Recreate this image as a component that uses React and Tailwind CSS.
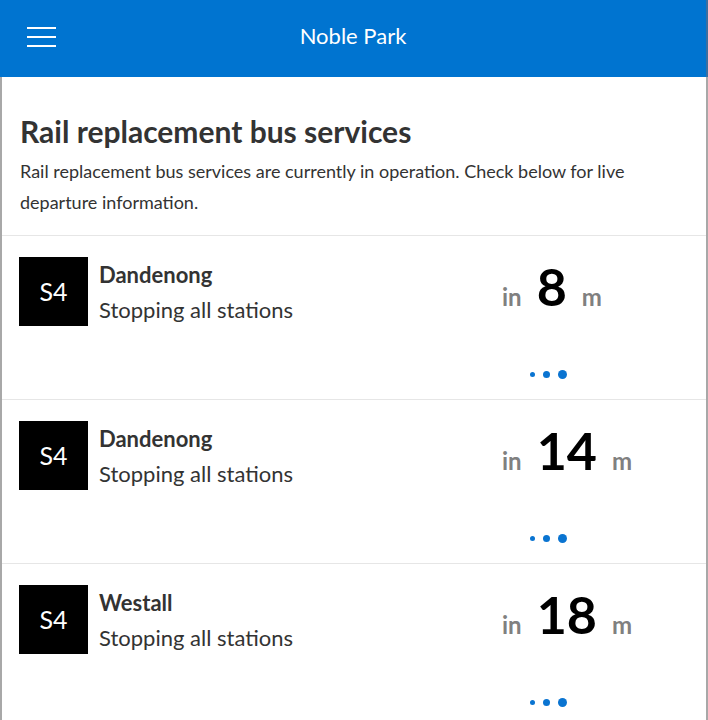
import React from "react";

const rows = [
  { dest: "Dandenong", mins: "8" },
  { dest: "Dandenong", mins: "14" },
  { dest: "Westall", mins: "18" },
];

function Row({ dest, mins }) {
  return (
    <div className="h-[164px] border-t border-[#e6e6e6] flex pt-[21px] pl-[17px]">
      <div className="w-[69px] h-[69px] bg-black text-white flex items-center justify-center text-[25px] shrink-0">
        S4
      </div>
      <div className="ml-[11px] flex-1 pt-[5px]">
        <div className="text-[22px] font-bold text-[#333] leading-[26px]">{dest}</div>
        <div className="text-[22px] text-[#333] leading-[26px] mt-[9px]">Stopping all stations</div>
      </div>
      <div className="w-[204px] shrink-0 flex flex-col">
        <div className="flex items-baseline h-[60px] -mt-[1px]">
          <span className="text-[24px] font-bold text-[#808080]">in</span>
          <span className="text-[52px] font-bold text-black ml-[15px] leading-[60px]">{mins}</span>
          <span className="text-[24px] font-bold text-[#808080] ml-[15px]">m</span>
        </div>
        <div className="flex items-center gap-[8px] pl-[28px] mt-[54px]">
          <span className="w-[5px] h-[5px] rounded-full bg-[#0a74d1]" />
          <span className="w-[7px] h-[7px] rounded-full bg-[#0a74d1]" />
          <span className="w-[9px] h-[9px] rounded-full bg-[#0a74d1]" />
        </div>
      </div>
    </div>
  );
}

export default function App() {
  return (
    <div className="w-[708px] h-[720px] overflow-hidden bg-white flex flex-col" style={{ fontFamily: "Lato, 'Open Sans', sans-serif" }}>
      <div className="h-[77px] bg-[#0074d0] flex items-start relative shrink-0 border-r-2 border-[#3a6fa0]">
        <div className="ml-[27px] mt-[27px] flex flex-col gap-[7px]">
          <span className="block w-[29px] h-[2px] bg-white" />
          <span className="block w-[29px] h-[2px] bg-white" />
          <span className="block w-[29px] h-[2px] bg-white" />
        </div>
        <div className="absolute left-0 right-0 text-center text-white text-[22px] top-[19px]">Noble Park</div>
      </div>
      <div className="flex-1 border-l-2 border-r-2 border-[#a8a8a8] flex flex-col">
        <div className="pt-[36px] pl-[18px] pr-[20px] pb-[17px]">
          <h1 className="text-[30px] font-bold text-[#333] leading-[36px]">Rail replacement bus services</h1>
          <p className="text-[18px] text-[#333] leading-[31px] mt-[7px]">
            Rail replacement bus services are currently in operation. Check below for live departure information.
          </p>
        </div>
        {rows.map((r, i) => (
          <Row key={i} {...r} />
        ))}
      </div>
    </div>
  );
}
